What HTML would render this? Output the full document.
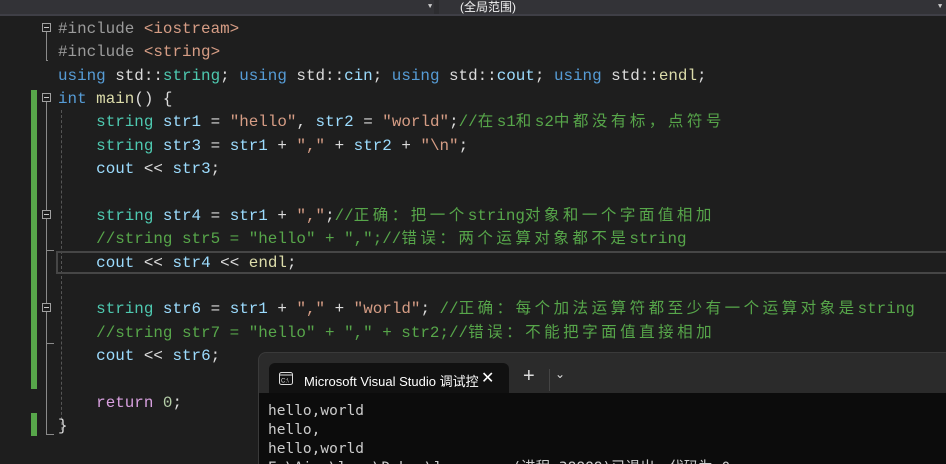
<!DOCTYPE html>
<html><head><meta charset="utf-8"><style>
html,body{margin:0;width:946px;height:464px;overflow:hidden}
body{background:#1e1e1e;position:relative;font-family:"Liberation Mono","Noto Sans CJK SC",monospace}
.top{position:absolute;left:0;top:0;width:946px;height:14px;background:#333337;border-bottom:2px solid #3f3f46}
.top .sep{position:absolute;left:434px;top:0;width:5px;height:14px;background:#2d2d30}
.top .t{position:absolute;left:460px;top:-2px;font:12px "Liberation Sans","Noto Sans CJK SC",sans-serif;color:#f1f1f1}
.code{position:absolute;left:58px;top:18px;font-size:15.9px;color:#dcdcdc;white-space:pre}
.code div{height:23.37px;line-height:23.37px;overflow:visible}
.c{font-family:"Noto Sans CJK SC",sans-serif;font-size:15.5px;letter-spacing:3.5px;line-height:1px}
.pp{color:#9b9b9b}.inc{color:#d69d85}.kw{color:#569cd6}.ty{color:#4ec9b0}.s{color:#d69d85}.cm{color:#57a64a}.v{color:#9cdcfe}.f{color:#dcdcaa}.r{color:#d8a0df}.n{color:#b5cea8}
.g{position:absolute;left:31px;width:6px;background:#57a64a}
.fold{position:absolute;left:42px;width:9px;height:9px;border:1px solid #a0a0a0;box-sizing:border-box}
.fold:after{content:"";position:absolute;left:1px;top:3px;width:5px;height:1px;background:#c8c8c8}
.vl{position:absolute;left:46px;width:1px;background:#8a8a8a}
.hl{position:absolute;left:46px;width:2px;height:1px;background:#8a8a8a}
.cur{position:absolute;left:56px;top:251px;width:900px;height:19px;border:2px solid #464646}
.term{position:absolute;left:258px;top:352px;width:700px;height:112px;background:#2b2b2b;border-radius:8px 0 0 0;border:1px solid #3a3a3a;border-bottom:none;overflow:hidden;box-sizing:border-box}
.tab{position:absolute;left:10px;top:10px;width:240px;height:32px;background:#111;border-radius:6px 6px 0 0}
.tab span{position:absolute;left:35px;top:8px;font:13px "Liberation Sans","Noto Sans CJK SC",sans-serif;color:#fff}
.cont{position:absolute;left:0;top:40px;width:700px;height:80px;background:#0c0c0c}
.out{position:absolute;left:9px;top:49px;font:14.5px/19px "DejaVu Sans Mono",monospace;color:#cccccc;white-space:pre}
</style></head><body>
<div class="top"><div class="sep"></div><span class="t">(全局范围)</span><span style="position:absolute;left:428px;top:3px;color:#ccc;font-size:7px">▼</span><span style="position:absolute;left:938px;top:3px;color:#ccc;font-size:7px">▼</span></div>
<div class="g" style="top:90px;height:299px"></div>
<div class="g" style="top:413px;height:23px"></div>
<div class="fold" style="top:23px"></div>
<div class="vl" style="top:32px;height:28px"></div><div class="hl" style="top:60px"></div>
<div class="fold" style="top:93px"></div>
<div class="vl" style="top:102px;height:332px"></div><div class="hl" style="top:434px;width:8px"></div>
<div class="fold" style="top:210px;background:#1e1e1e"></div>
<div class="hl" style="top:250px;width:8px"></div>
<div class="fold" style="top:303px;background:#1e1e1e"></div>
<div class="hl" style="top:343px;width:8px"></div>
<div style="position:absolute;left:61px;top:110px;height:320px;border-left:1px dashed #555"></div>
<div class="cur"></div>
<div class="code"><div><span class="pp">#include</span> <span class="inc">&lt;iostream&gt;</span></div><div><span class="pp">#include</span> <span class="inc">&lt;string&gt;</span></div><div><span class="kw">using</span> std::<span class="ty">string</span>; <span class="kw">using</span> std::<span class="v">cin</span>; <span class="kw">using</span> std::<span class="v">cout</span>; <span class="kw">using</span> std::<span class="f">endl</span>;</div><div><span class="kw">int</span> <span class="f">main</span>() {</div><div>    <span class="ty">string</span> <span class="v">str1</span> = <span class="s">"hello"</span>, <span class="v">str2</span> = <span class="s">"world"</span>;<span class="cm">//<span class="c">在</span>s1<span class="c">和</span>s2<span class="c">中都没有标，点符号</span></span></div><div>    <span class="ty">string</span> <span class="v">str3</span> = <span class="v">str1</span> + <span class="s">","</span> + <span class="v">str2</span> + <span class="s">"\n"</span>;</div><div>    <span class="v">cout</span> &lt;&lt; <span class="v">str3</span>;</div><div> </div><div>    <span class="ty">string</span> <span class="v">str4</span> = <span class="v">str1</span> + <span class="s">","</span>;<span class="cm">//<span class="c">正确：把一个</span>string<span class="c">对象和一个字面值相加</span></span></div><div>    <span class="cm">//string str5 = "hello" + ",";//<span class="c">错误：两个运算对象都不是</span>string</span></div><div>    <span class="v">cout</span> &lt;&lt; <span class="v">str4</span> &lt;&lt; <span class="f">endl</span>;</div><div> </div><div>    <span class="ty">string</span> <span class="v">str6</span> = <span class="v">str1</span> + <span class="s">","</span> + <span class="s">"world"</span>; <span class="cm">//<span class="c">正确：每个加法运算符都至少有一个运算对象是</span>string</span></div><div>    <span class="cm">//string str7 = "hello" + "," + str2;//<span class="c">错误：不能把字面值直接相加</span></span></div><div>    <span class="v">cout</span> &lt;&lt; <span class="v">str6</span>;</div><div> </div><div>    <span class="r">return</span> <span class="n">0</span>;</div><div>}</div></div>
<div class="term">
<div class="tab"><svg style="position:absolute;left:10px;top:9px" width="14" height="13" viewBox="0 0 14 13"><rect x="0.5" y="0.5" width="13" height="12" rx="2" fill="none" stroke="#ddd"/><line x1="0.5" y1="3" x2="13.5" y2="3" stroke="#ddd"/><text x="2" y="10.5" font-size="6" fill="#ddd" font-family="Liberation Sans">C:\</text></svg><span>Microsoft Visual Studio 调试控</span><span style="left:212px;top:5px;font-size:16px">✕</span></div>
<span style="position:absolute;left:264px;top:12px;color:#ddd;font:20px 'Liberation Sans',sans-serif">+</span>
<div style="position:absolute;left:290px;top:16px;width:1px;height:22px;background:#444"></div>
<span style="position:absolute;left:296px;top:14px;color:#ddd;font:12px 'DejaVu Sans',sans-serif">⌄</span>
<div class="cont"></div>
<div class="out">hello,world
hello,
hello,world
E:\Aiwu\lear\Debug\lear.exe (进程 38888)已退出，代码为 0。</div>
</div>
</body></html>
